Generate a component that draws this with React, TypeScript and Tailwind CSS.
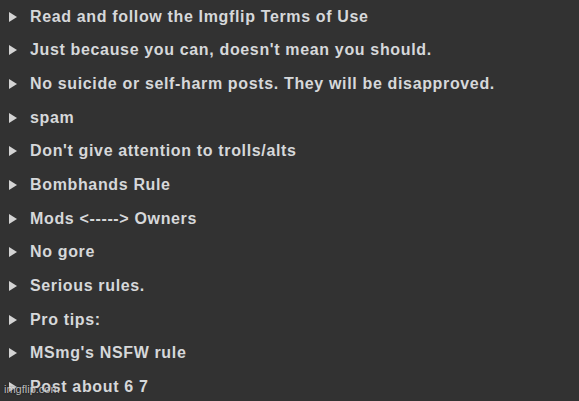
const rules = [
  'Read and follow the Imgflip Terms of Use',
  "Just because you can, doesn't mean you should.",
  'No suicide or self-harm posts. They will be disapproved.',
  'spam',
  "Don't give attention to trolls/alts",
  'Bombhands Rule',
  'Mods <-----> Owners',
  'No gore',
  'Serious rules.',
  'Pro tips:',
  "MSmg's NSFW rule",
  'Post about 6 7',
];

function Caret() {
  return (
    <svg width="8" height="10" viewBox="0 0 8 10" className="shrink-0">
      <path d="M0 0 L8 5 L0 10 Z" fill="#d4d4d4" />
    </svg>
  );
}

export default function App() {
  return (
    <div className="relative w-[579px] h-[401px] overflow-hidden bg-[#323232] font-['Liberation_Sans',Arial,sans-serif]">
      <ul className="grid auto-rows-[33.65px]">
        {rules.map(r => (
          <li key={r} className="flex items-center pl-[9px] gap-[13px]">
            <Caret />
            <span className="text-[16px] font-bold tracking-[0.65px] text-[#d6d8da] leading-none">{r}</span>
          </li>
        ))}
      </ul>
      <span className="absolute left-[4px] bottom-[6px] text-[11px] leading-none text-white/70 [text-shadow:0_0_2px_rgba(0,0,0,0.6)]">
        imgflip.com
      </span>
    </div>
  );
}
